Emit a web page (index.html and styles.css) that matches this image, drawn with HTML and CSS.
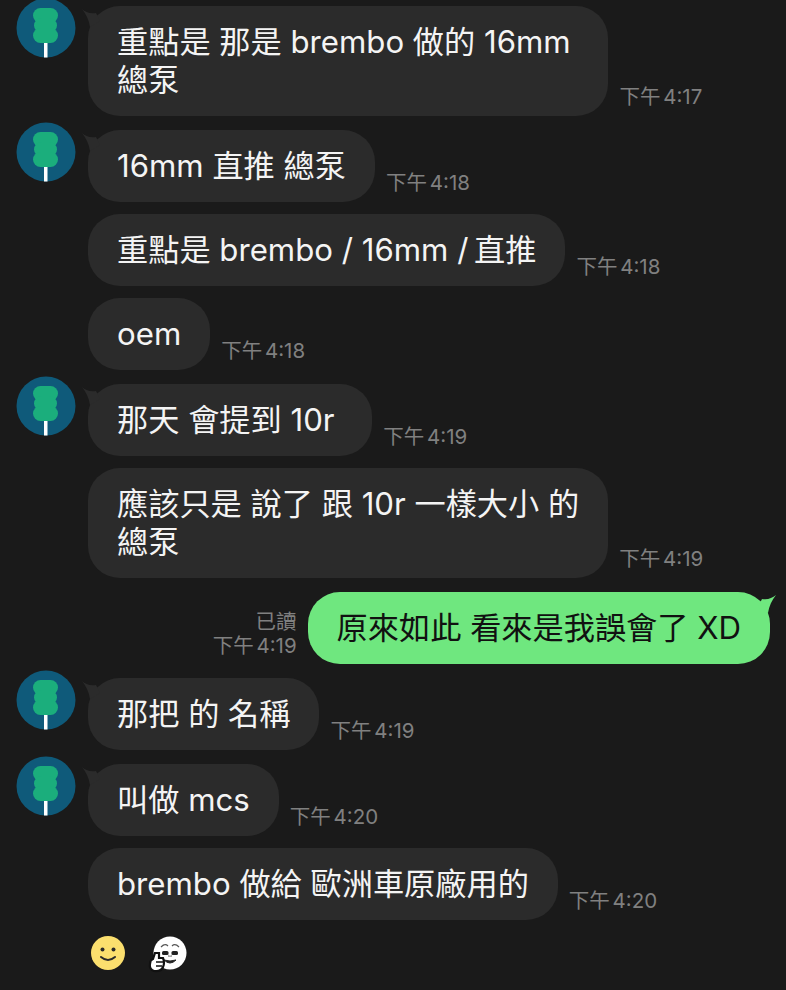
FILE: index.html
```html
<!DOCTYPE html>
<html lang="zh-Hant">
<head>
    <meta charset="UTF-8">
    <meta name="viewport" content="width=device-width, initial-scale=1.0">
    <title>聊天</title>
    <link rel="stylesheet" href="styles.css">
</head>
<body>
    <svg width="0" height="0" class="defs">
        <symbol id="avatar" viewBox="0 0 60 60">
            <circle cx="30" cy="30" r="29.5" fill="#0f5a7a"/>
            <rect x="28" y="42" width="3.5" height="17.5" fill="#fff"/>
            <rect x="17" y="10" width="25" height="15" rx="7.5" fill="#1bae7c"/>
            <rect x="18" y="20" width="23" height="15" rx="7.5" fill="#1bae7c"/>
            <rect x="17" y="30" width="25" height="15" rx="7.5" fill="#1bae7c"/>
        </symbol>
        <symbol id="tail" viewBox="0 0 18 20">
            <path d="M0 0 C3 3 8 5 14 4 L18 12 L8 18 C7 11 4 5 0 0 Z" fill="#2b2b2b"/>
        </symbol>
    </svg>

    <div class="row first">
        <svg class="avatar"><use href="#avatar"/></svg>
        <div class="bubble">
            <svg class="tail"><use href="#tail"/></svg>
            重點是 那是 brembo 做的 16mm&nbsp;<br>總泵
        </div>
        <span class="time">下午 4:17</span>
    </div>

    <div class="row">
        <svg class="avatar"><use href="#avatar"/></svg>
        <div class="bubble">
            <svg class="tail"><use href="#tail"/></svg>
            16mm 直推 總泵
        </div>
        <span class="time">下午 4:18</span>
    </div>

    <div class="row cont">
        <div class="bubble">重點是 brembo / 16mm /&thinsp;直推</div>
        <span class="time">下午 4:18</span>
    </div>

    <div class="row cont">
        <div class="bubble">oem</div>
        <span class="time">下午 4:18</span>
    </div>

    <div class="row">
        <svg class="avatar"><use href="#avatar"/></svg>
        <div class="bubble">
            <svg class="tail"><use href="#tail"/></svg>
            那天 會提到 10r&nbsp;
        </div>
        <span class="time">下午 4:19</span>
    </div>

    <div class="row cont">
        <div class="bubble">應該只是 說了 跟 10r 一樣大小 的<br>總泵</div>
        <span class="time">下午 4:19</span>
    </div>

    <div class="row mine">
        <div class="time read">已讀<br>下午 4:19</div>
        <div class="bubble green">
            <svg class="tail-mine" viewBox="0 0 18 20"><path d="M18 0 C14 3 10 5 4 4 L0 12 L10 18 C11 11 14 5 18 0 Z" fill="#6fe77f"/></svg>
            原來如此 看來是我誤會了 XD
        </div>
    </div>

    <div class="row">
        <svg class="avatar"><use href="#avatar"/></svg>
        <div class="bubble">
            <svg class="tail"><use href="#tail"/></svg>
            那把 的 名稱
        </div>
        <span class="time">下午 4:19</span>
    </div>

    <div class="row">
        <svg class="avatar"><use href="#avatar"/></svg>
        <div class="bubble">
            <svg class="tail"><use href="#tail"/></svg>
            叫做 mcs
        </div>
        <span class="time">下午 4:20</span>
    </div>

    <div class="row cont">
        <div class="bubble">brembo 做給 歐洲車原廠用的</div>
        <span class="time">下午 4:20</span>
    </div>

    <div class="reactions">
        <svg class="smile" viewBox="0 0 36 36">
            <circle cx="18" cy="18" r="17" fill="#fbdf6e"/>
            <circle cx="12.5" cy="14.5" r="2" fill="#2a2a2a"/>
            <circle cx="23.5" cy="14.5" r="2" fill="#2a2a2a"/>
            <path d="M11 22 Q18 28 25 22" fill="none" stroke="#2a2a2a" stroke-width="2" stroke-linecap="round"/>
        </svg>
        <svg class="thumb" viewBox="0 0 40 40">
            <circle cx="22" cy="20" r="16.5" fill="#fff"/>
            <path d="M13 14 Q17 10 20 13 M24 13 Q27 10 31 14" fill="none" stroke="#555" stroke-width="1.2"/>
            <rect x="14" y="18" width="6.5" height="4" rx="1.5" fill="#222"/>
            <rect x="23.5" y="18" width="6.5" height="4" rx="1.5" fill="#222"/>
            <path d="M20 21 Q22 24 24 21 L24 24 L20 24 Z" fill="#aaa"/>
            <path d="M16 27 Q22 33 28 27 Q22 29 16 27 Z" fill="#222" stroke="#222"/>
            <path d="M5 26 L7 20 L11 20 L11 25 L15 25 Q17 30 15 34 Q13 39 6 38 Q1 36 2 31 Q2 27 5 26 Z" fill="#fff" stroke="#111" stroke-width="2.2"/>
            <path d="M8 29 H15 M8 33 H14" stroke="#111" stroke-width="1.5"/>
        </svg>
    </div>
</body>
</html>
```

FILE: styles.css
```css
* {
    box-sizing: border-box;
}
html, body {
    height: 100%;
}
body {
    margin: 0;
    padding-top: 6px;
    background-color: #1a1a1a;
    font-family: Inter, "Noto Sans CJK TC", sans-serif;
    overflow: hidden;
}
.defs {
    position: absolute;
}

.row {
    display: flex;
    align-items: flex-end;
    margin-top: 14px;
    padding-left: 16px;
}
.row.first {
    margin-top: 0;
}
.row.cont {
    margin-top: 12px;
    padding-left: 88px;
}
.row.mine {
    justify-content: flex-end;
    padding-right: 16px;
}

.avatar {
    width: 60px;
    height: 60px;
    margin-right: 12px;
    align-self: flex-start;
    margin-top: -8px;
    flex-shrink: 0;
}

.bubble {
    position: relative;
    background-color: #2b2b2b;
    color: #f4f4f4;
    font-size: 31.2px;
    line-height: 38px;
    padding: 17px 29px;
    border-radius: 32px;
}
.bubble.green {
    background-color: #6fe77f;
    color: #111;
}

/* little tails on the bubble corner */
.tail {
    position: absolute;
    left: -6px;
    top: 3px;
    width: 18px;
    height: 20px;
}
.tail-mine {
    position: absolute;
    right: -6px;
    top: 3px;
    width: 18px;
    height: 20px;
}

.time {
    margin-left: 11px;
    padding-bottom: 7px;
    color: #808080;
    font-size: 20.5px;
    line-height: 24px;
    word-spacing: -3px;
}
.time.read {
    margin-left: 0;
    margin-right: 11px;
    padding-bottom: 6px;
    text-align: right;
}

.reactions {
    display: flex;
    align-items: flex-start;
    padding: 13px 0 0 90px;
}
.smile {
    width: 36px;
    height: 36px;
    margin-top: 2px;
    margin-right: 22px;
}
.thumb {
    width: 40px;
    height: 40px;
}
```
